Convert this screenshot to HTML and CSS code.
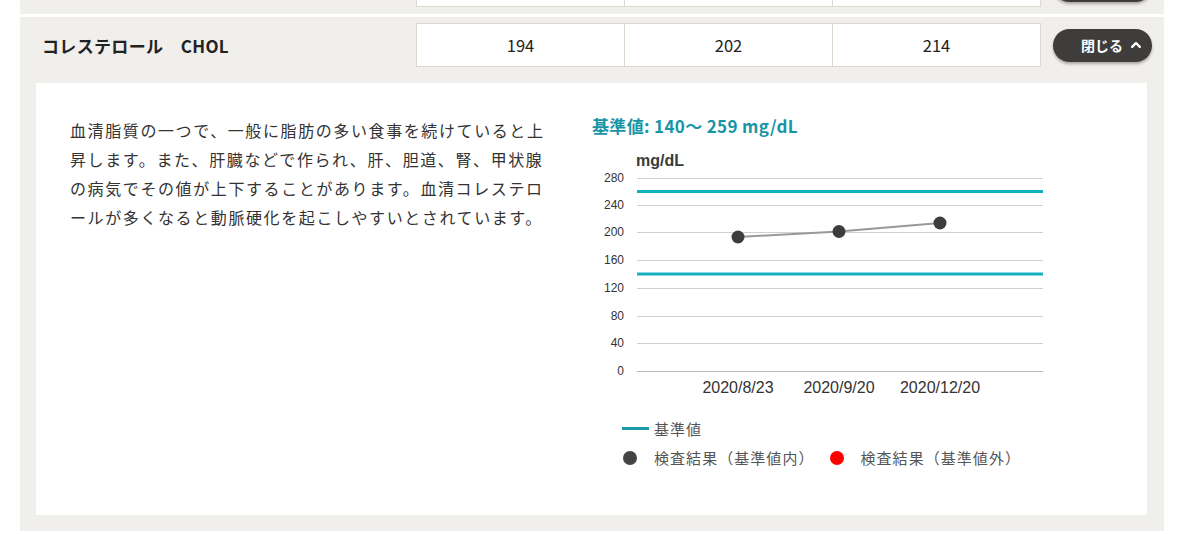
FILE: index.html
```html
<!DOCTYPE html>
<html lang="ja">
<head>
<meta charset="utf-8">
<link rel="stylesheet" href="styles.css">
</head>
<body>
<div class="page">
  <div class="panel panel-collapsed">
    <div class="row-head row-head-prev">
      <div class="title"></div>
      <div class="cells">
        <div class="cell"></div>
        <div class="cell"></div>
        <div class="cell"></div>
      </div>
      <button class="toggle"></button>
    </div>
  </div>

  <div class="panel">
    <div class="row-head">
      <div class="title">コレステロール　CHOL</div>
      <div class="cells">
        <div class="cell">194</div>
        <div class="cell">202</div>
        <div class="cell">214</div>
      </div>
      <button class="toggle"><span>閉じる</span>
        <svg class="chev" width="10" height="7" viewBox="0 0 10 7"><polyline points="1.2,5.8 5,2 8.8,5.8" fill="none" stroke="#fff" stroke-width="2.4" stroke-linecap="round" stroke-linejoin="round"/></svg>
      </button>
    </div>
    <div class="detail">
      <p class="desc">血清脂質の一つで、一般に脂肪の多い食事を続けていると上昇します。また、肝臓などで作られ、肝、胆道、腎、甲状腺の病気でその値が上下することがあります。血清コレステロールが多くなると動脈硬化を起こしやすいとされています。</p>
      <div class="chart-col">
        <div class="range">基準値: 140〜 259 mg/dL</div>
        <svg class="chart" width="460" height="255" viewBox="0 0 460 255">
          <text x="44" y="21" class="unit">mg/dL</text>
          <g class="grid">
            <line x1="45" x2="451" y1="33.5" y2="33.5"/>
            <line x1="45" x2="451" y1="60.5" y2="60.5"/>
            <line x1="45" x2="451" y1="87.5" y2="87.5"/>
            <line x1="45" x2="451" y1="115.5" y2="115.5"/>
            <line x1="45" x2="451" y1="143.5" y2="143.5"/>
            <line x1="45" x2="451" y1="171.5" y2="171.5"/>
            <line x1="45" x2="451" y1="198.5" y2="198.5"/>
            <line x1="45" x2="451" y1="226.5" y2="226.5" class="base"/>
          </g>
          <g class="ylab">
            <text x="32" y="37">280</text>
            <text x="32" y="64">240</text>
            <text x="32" y="91">200</text>
            <text x="32" y="119">160</text>
            <text x="32" y="147">120</text>
            <text x="32" y="175">80</text>
            <text x="32" y="202">40</text>
            <text x="32" y="230">0</text>
          </g>
          <line x1="45" x2="451" y1="46.5" y2="46.5" class="ref"/>
          <line x1="45" x2="451" y1="129" y2="129" class="ref"/>
          <polyline points="146,92 247,86.5 348,78" class="trend"/>
          <circle cx="146" cy="92" r="6.5" class="pt"/>
          <circle cx="247" cy="86.5" r="6.5" class="pt"/>
          <circle cx="348" cy="78" r="6.5" class="pt"/>
          <g class="xlab">
            <text x="146" y="248">2020/8/23</text>
            <text x="247" y="248">2020/9/20</text>
            <text x="348" y="248">2020/12/20</text>
          </g>
        </svg>
        <div class="legend">
          <div class="legend-row">
            <span class="key-line"></span><span class="key-text">基準値</span>
          </div>
          <div class="legend-row">
            <span class="key-dot"></span><span class="key-text dot-text">検査結果（基準値内）</span>
            <span class="key-dot key-dot-red"></span><span class="key-text dot-text">検査結果（基準値外）</span>
          </div>
        </div>
      </div>
    </div>
  </div>
</div>
</body>
</html>
```

FILE: styles.css
```css
* { box-sizing: border-box; }
html, body { margin: 0; padding: 0; background: #fff; }
body {
  font-family: "Noto Sans CJK JP", "Noto Sans", sans-serif;
  color: #333;
  width: 1182px;
  height: 534px;
  overflow: hidden;
}
.page {
  padding: 0 18px 0 20px;
}
.panel {
  background: #f0efeb;
  padding: 0 17px 16px 16px;
}
.panel-collapsed {
  height: 14px;
  overflow: hidden;
  padding: 0;
  margin-bottom: 3px;
}
.row-head {
  display: flex;
  align-items: center;
  padding: 6px 12px 0 22px;
  margin: 0 -17px 16px -16px;
}
.row-head-prev {
  margin: -43px 0 0 0;
}
.title {
  flex: 0 0 374px;
  font-size: 17px;
  font-weight: 700;
  color: #222;
  letter-spacing: 0.02em;
}
.cells {
  display: flex;
  width: 625px;
  background: #fff;
  border: 1px solid #dcd9d0;
}
.cell {
  flex: 1 1 0;
  height: 42px;
  display: flex;
  align-items: center;
  justify-content: center;
  font-size: 16.5px;
  color: #222;
  border-left: 1px solid #dcd9d0;
}
.cell:first-child { border-left: 0; }
.toggle {
  margin-left: 12px;
  width: 99px;
  height: 33px;
  border: 0;
  border-radius: 17px;
  background: #3e3d3b;
  box-shadow: 0 2px 3px rgba(0,0,0,0.3);
  color: #fff;
  font-family: "Noto Sans CJK JP", sans-serif;
  font-size: 14px;
  font-weight: 700;
  display: flex;
  align-items: center;
  padding: 0 0 0 28px;
  gap: 8px;
}
.chev { display: block; margin-top: -1px; }
.detail {
  background: #fff;
  height: 432px;
  display: flex;
  padding: 30px 0 0 34px;
}
.desc {
  margin: 3px 0 0 0;
  width: 480px;
  font-size: 16px;
  line-height: 29px;
  letter-spacing: 0.1em;
  color: #333;
  line-break: normal;
}
.chart-col {
  margin-left: 42px;
  display: flex;
  flex-direction: column;
}
.range {
  font-size: 17px;
  font-weight: 700;
  line-height: 26px;
  color: #1795a7;
  letter-spacing: 0.02em;
}
.chart {
  display: block;
  margin-top: 6px;
  font-family: "Liberation Sans", Arial, sans-serif;
}
.unit { font-size: 16px; font-weight: 700; fill: #3a3a3a; }
.grid line { stroke: #cfcfcf; stroke-width: 1; }
.grid line.base { stroke: #bdbdbd; }
.ylab text { font-size: 12px; fill: #333; text-anchor: end; }
.xlab text { font-size: 16px; fill: #333; text-anchor: middle; }
.ref { stroke: #12b1bd; stroke-width: 3; }
.trend { fill: none; stroke: #999; stroke-width: 2; }
.pt { fill: #3d3d3d; }
.legend {
  margin-top: 14px;
  padding-left: 30px;
  display: flex;
  flex-direction: column;
}
.legend-row {
  display: flex;
  align-items: center;
  height: 29px;
}
.key-line {
  width: 27px;
  height: 3px;
  background: #1a9aab;
  margin-right: 5px;
}
.key-text {
  font-size: 15px;
  color: #555;
  letter-spacing: 0.07em;
}
.key-dot {
  width: 14px;
  height: 14px;
  border-radius: 50%;
  background: #444;
  margin-left: 1px;
  margin-right: 17px;
}
.key-dot-red {
  background: #f00;
  margin-left: 15px;
}
```
